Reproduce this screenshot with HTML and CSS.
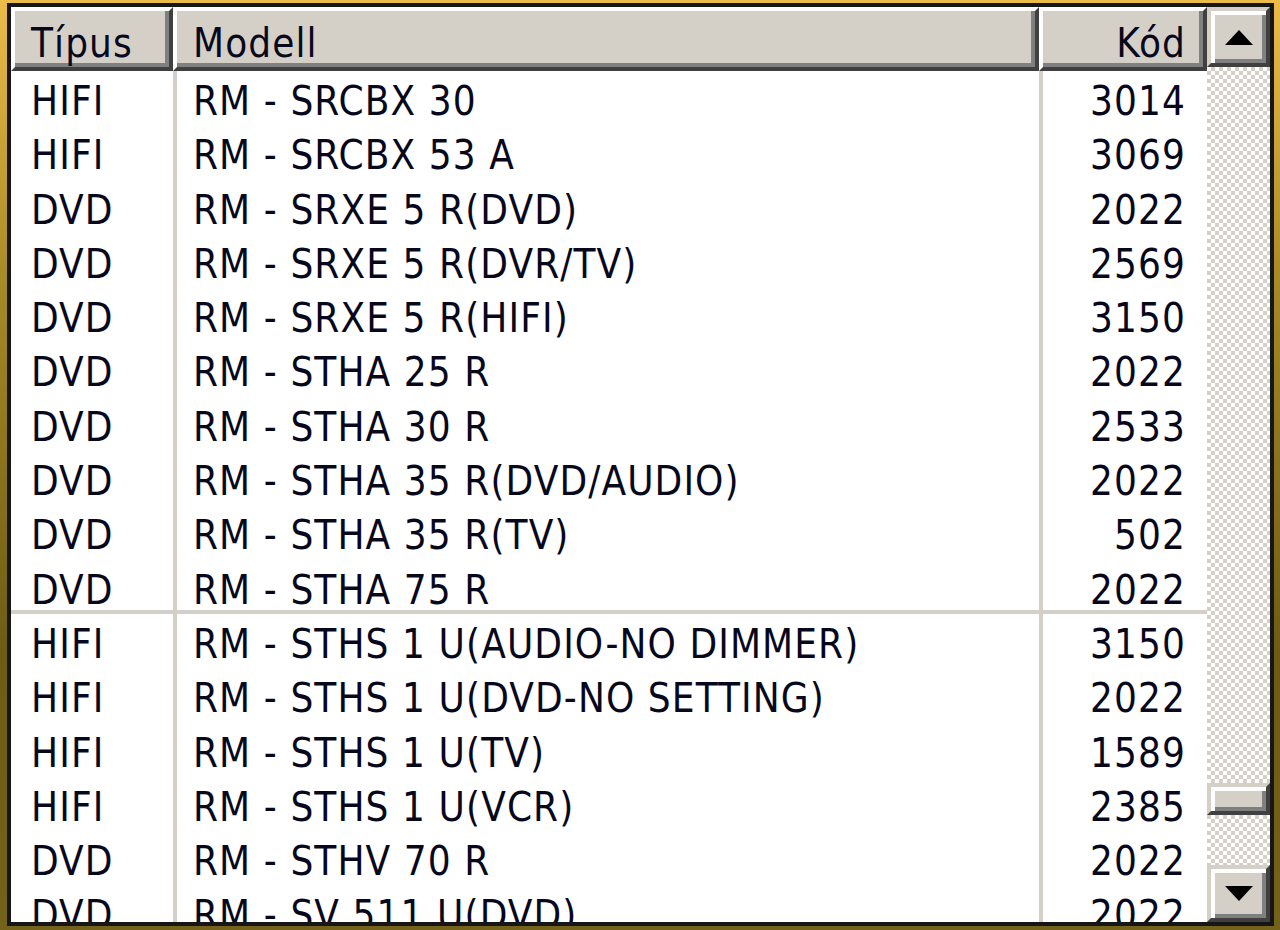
FILE: index.html
```html
<!DOCTYPE html>
<html lang="hu">
<head>
    <meta charset="UTF-8">
    <meta name="viewport" content="width=device-width, initial-scale=1.0">
    <title>Távirányító kódok</title>
    <link rel="stylesheet" href="styles.css">
</head>
<body>
    <div class="frame">
        <div class="listview">
            <div class="content">
                <div class="header">
                    <div class="col-head head-type">Típus</div>
                    <div class="col-head head-model">Modell</div>
                    <div class="col-head head-code">Kód</div>
                </div>
                <div class="rows">
                    <div class="row"><span class="cell type">HIFI</span><span class="cell model">RM - SRCBX 30</span><span class="cell code">3014</span></div>
                    <div class="row"><span class="cell type">HIFI</span><span class="cell model">RM - SRCBX 53 A</span><span class="cell code">3069</span></div>
                    <div class="row"><span class="cell type">DVD</span><span class="cell model">RM - SRXE 5 R(DVD)</span><span class="cell code">2022</span></div>
                    <div class="row"><span class="cell type">DVD</span><span class="cell model">RM - SRXE 5 R(DVR/TV)</span><span class="cell code">2569</span></div>
                    <div class="row"><span class="cell type">DVD</span><span class="cell model">RM - SRXE 5 R(HIFI)</span><span class="cell code">3150</span></div>
                    <div class="row"><span class="cell type">DVD</span><span class="cell model">RM - STHA 25 R</span><span class="cell code">2022</span></div>
                    <div class="row"><span class="cell type">DVD</span><span class="cell model">RM - STHA 30 R</span><span class="cell code">2533</span></div>
                    <div class="row"><span class="cell type">DVD</span><span class="cell model">RM - STHA 35 R(DVD/AUDIO)</span><span class="cell code">2022</span></div>
                    <div class="row"><span class="cell type">DVD</span><span class="cell model">RM - STHA 35 R(TV)</span><span class="cell code">502</span></div>
                    <div class="row sep"><span class="cell type">DVD</span><span class="cell model">RM - STHA 75 R</span><span class="cell code">2022</span></div>
                    <div class="row"><span class="cell type">HIFI</span><span class="cell model">RM - STHS 1 U(AUDIO-NO DIMMER)</span><span class="cell code">3150</span></div>
                    <div class="row"><span class="cell type">HIFI</span><span class="cell model">RM - STHS 1 U(DVD-NO SETTING)</span><span class="cell code">2022</span></div>
                    <div class="row"><span class="cell type">HIFI</span><span class="cell model">RM - STHS 1 U(TV)</span><span class="cell code">1589</span></div>
                    <div class="row"><span class="cell type">HIFI</span><span class="cell model">RM - STHS 1 U(VCR)</span><span class="cell code">2385</span></div>
                    <div class="row"><span class="cell type">DVD</span><span class="cell model">RM - STHV 70 R</span><span class="cell code">2022</span></div>
                    <div class="row"><span class="cell type">DVD</span><span class="cell model">RM - SV 511 U(DVD)</span><span class="cell code">2022</span></div>
                </div>
            </div>
            <div class="scrollbar">
                <div class="sb-btn sb-up"><span class="arrow-up"></span></div>
                <div class="sb-track"><div class="sb-thumb"></div></div>
                <div class="sb-btn sb-down"><span class="arrow-down"></span></div>
            </div>
        </div>
    </div>
</body>
</html>
```

FILE: styles.css
```css
body {
    margin: 0;
    font-family: "DejaVu Sans Condensed", "DejaVu Sans", sans-serif;
    font-stretch: condensed;
    font-size: 40px;
    letter-spacing: 1.1px;
    color: #08081c;
}
.frame {
    width: 1280px;
    height: 930px;
    box-sizing: border-box;
    padding: 3px 6px 4px 7px;
    background: linear-gradient(to bottom, #ecbc48 0%, #a88a26 30%, #6e5c14 70%, #74621a 100%);
}
.listview {
    height: 923px;
    box-sizing: border-box;
    border: 4px solid #161616;
    background: #fff;
    display: flex;
    overflow: hidden;
}
.content {
    width: 1196px;
    overflow: hidden;
}
.header {
    display: flex;
    height: 64px;
}
.col-head {
    box-sizing: border-box;
    height: 64px;
    padding-top: 9px;
    line-height: 47px;
    background: #d4d0c8;
    border-style: solid;
    border-width: 4px;
    border-color: #fff #404040 #404040 #fff;
    box-shadow: inset -4px -4px 0 #808080;
    white-space: nowrap;
}
.head-type {
    width: 162px;
    padding-left: 16px;
}
.head-model {
    width: 866px;
    padding-left: 16px;
}
.head-code {
    width: 168px;
    padding-right: 17px;
    text-align: right;
}
.row {
    display: grid;
    grid-template-columns: 166px 866px 164px;
    height: 54.3px;
}
.row.sep {
    box-shadow: inset 0 -4px 0 #d4d0c8;
}
.cell {
    box-sizing: border-box;
    padding-top: 7px;
    line-height: 47px;
    white-space: nowrap;
}
.type {
    padding-left: 20px;
    border-right: 4px solid #d4d0c8;
}
.model {
    padding-left: 16px;
    border-right: 4px solid #d4d0c8;
}
.code {
    padding-right: 21px;
    text-align: right;
}
.scrollbar {
    width: 63px;
    display: flex;
    flex-direction: column;
}
.sb-btn {
    box-sizing: border-box;
    background: #d4d0c8;
    border: 4px solid;
    border-color: #d4d0c8 #404040 #404040 #d4d0c8;
    box-shadow: inset 4px 4px 0 #fff, inset -4px -4px 0 #808080;
    display: flex;
    align-items: center;
    justify-content: center;
}
.sb-up {
    height: 60px;
}
.sb-down {
    height: 57px;
}
.arrow-up {
    width: 0;
    height: 0;
    border-left: 14px solid transparent;
    border-right: 14px solid transparent;
    border-bottom: 15px solid #000;
}
.arrow-down {
    width: 0;
    height: 0;
    border-left: 14px solid transparent;
    border-right: 14px solid transparent;
    border-top: 15px solid #000;
}
.sb-track {
    flex: 1;
    background: repeating-conic-gradient(#d4d0c8 0 25%, #fff 0 50%) 0 0 / 8px 8px;
}
.sb-thumb {
    margin-top: 716px;
    height: 32px;
    box-sizing: border-box;
    background: #d4d0c8;
    border: 4px solid;
    border-color: #d4d0c8 #404040 #404040 #d4d0c8;
    box-shadow: inset 4px 4px 0 #fff, inset -4px -4px 0 #808080;
}
```
